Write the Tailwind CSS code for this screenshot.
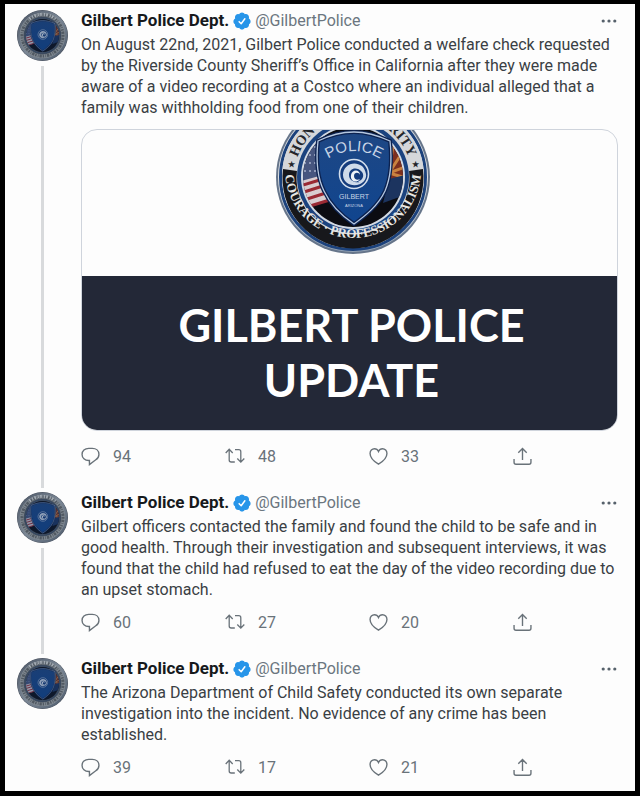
<!DOCTYPE html>
<html lang="en">
<head>
    <meta charset="UTF-8" />
    <meta name="viewport" content="width=device-width, initial-scale=1.0" />
    <title>Gilbert Police Dept. thread</title>
    <script src="https://cdn.jsdelivr.net/npm/@tailwindcss/browser@4"></script>
</head>
<body class="bg-black pt-1 px-[5px] pb-[5px] font-['Roboto','Liberation_Sans',sans-serif] text-base leading-[21px] text-[#3a3f44]">

    <!-- ====== Shared shapes ====== -->
    <svg class="absolute size-0" aria-hidden="true" xmlns="http://www.w3.org/2000/svg">
        <defs>
            <linearGradient id="steel" x1="0" y1="0" x2="0" y2="1">
                <stop offset="0" stop-color="#c9ccd0" /><stop offset=".5" stop-color="#dfe2e5" /><stop offset="1" stop-color="#8fa0b4" />
            </linearGradient>
            <linearGradient id="rim" x1="0" y1="0" x2="1" y2="1">
                <stop offset="0" stop-color="#4c5665" /><stop offset=".5" stop-color="#7c8896" /><stop offset="1" stop-color="#4d5a6b" />
            </linearGradient>
            <linearGradient id="shieldFill" x1="0" y1="0" x2="0" y2="1">
                <stop offset="0" stop-color="#1e4784" /><stop offset="1" stop-color="#10458f" />
            </linearGradient>
            <clipPath id="disc"><circle r="50" /></clipPath>
            <path id="shieldShape" d="M1 -45C11 -45 24 -42 37 -36C39 -18 38 0 32 14C25 29 12 39 1 47C-11 39 -22 29 -29 14C-36 0 -37 -18 -35 -36C-23 -42 -10 -45 1 -45Z" />
            <path id="topArc" d="M-59 0A59 59 0 0 1 59 0" />
            <path id="bottomArc" d="M-68 -7A68 68 0 1 0 68 -7" />
            <path id="policeArc" d="M-30 -15Q1 -37 32 -15" />
        </defs>

        <symbol id="emblem" viewBox="-52 -52 104 104">
            <circle r="50" fill="#0b0c12" />
            <g clip-path="url(#disc)">
                <path d="M-52 -38L-28 -42L-26 10L-52 8Z" fill="#47567f" />
                <path d="M-49 -30h20M-49 -22h20M-49 -14h20M-49 -6h20" stroke="#8f9ab8" stroke-width="2" stroke-dasharray="2 3" />
                <path d="M-52 4L-30 -2L-20 22L-44 30Z" fill="#d9cdd0" />
                <path d="M-50 8L-30 2M-49 15L-27 8M-46 22L-24 15M-43 29L-20 22" stroke="#9a2a34" stroke-width="3" />
                <path d="M36 -34L52 -20V2L34 4Z" fill="#7c2f1f" />
                <path d="M36 -4L40 -32M36 -4L49 -24M36 -4L52 -10M36 -4L50 0" stroke="#c98240" stroke-width="3" />
                <path d="M36 2L52 -2V18L30 26Z" fill="#1c345f" />
            </g>
            <use href="#shieldShape" fill="url(#shieldFill)" stroke="#0c2250" stroke-width="4" />
            <use href="#shieldShape" fill="none" stroke="#b5c7df" stroke-width="1.3" />
            <circle cx="1" cy="-3" r="14.5" fill="#143c7d" stroke="#d4dfed" stroke-width="1.6" />
            <path d="M9 -11C1 -17 -10 -12 -10 -2C-10 8 4 12 11 4C5 7 -4 5 -4 -2C-4 -9 4 -11 9 -5C12 -1 9 4 5 4C9 9 14 2 13 -3C12 -7 11 -9 9 -11Z" fill="#cfdbea" />
            <path d="M-2 -2C-1 -8 7 -8 7 -2C6 -5 1 -5 1 -1C1 2 4 4 7 2C3 7 -3 4 -2 -2Z" fill="#eef3f8" />
        </symbol>

        <symbol id="avatarArt" viewBox="-77 -77 154 154">
            <circle r="77" fill="#4a525e" />
            <circle r="71" fill="none" stroke="url(#rim)" stroke-width="9" />
            <circle r="63" fill="none" stroke="#7d868f" stroke-width="12" />
            <circle r="62" fill="none" stroke="#515962" stroke-width="9" stroke-dasharray="4 3 7 3 2 4" />
            <path d="M-40 -50A64 64 0 0 1 40 -50" fill="none" stroke="#a3abb3" stroke-width="9" stroke-dasharray="5 6 3 4" />
            <circle r="53" fill="none" stroke="#344761" stroke-width="4" />
            <use href="#emblem" x="-52" y="-52" width="104" height="104" />
            <circle r="50" fill="#15315c" fill-opacity=".35" />
        </symbol>

        <symbol id="verified" viewBox="1 1 22 22">
            <path fill="#2795e9" d="M22.5 12.5c0-1.58-.88-2.95-2.15-3.6.15-.43.24-.9.24-1.4 0-2.21-1.71-4-3.82-4-.47 0-.92.09-1.34.25C14.82 2.42 13.51 1.5 12 1.5s-2.82.92-3.43 2.25a3.7 3.7 0 0 0-1.34-.25c-2.11 0-3.82 1.79-3.82 4 0 .49.09.97.24 1.4-1.27.65-2.15 2.02-2.15 3.6 0 1.5.78 2.8 1.94 3.49-.02.17-.03.34-.03.51 0 2.21 1.71 4 3.82 4 .47 0 .92-.09 1.34-.25.6 1.33 1.92 2.25 3.43 2.25s2.82-.92 3.43-2.25c.42.16.87.25 1.34.25 2.11 0 3.82-1.79 3.82-4 0-.17-.01-.34-.03-.51 1.16-.69 1.94-1.99 1.94-3.49z" />
            <path fill="none" stroke="#fff" stroke-width="1.8" stroke-linecap="round" stroke-linejoin="round" d="M8.500 12.800l2.500 2.500 4.500-6" />
        </symbol>
        <symbol id="dots" viewBox="0 0 16 6">
            <circle cx="2.200" cy="3" r="1.600" /><circle cx="8" cy="3" r="1.600" /><circle cx="13.800" cy="3" r="1.600" />
        </symbol>
        <symbol id="reply" viewBox="0 0 18 18">
            <path d="M7.300 1.300h3.400c3.700 0 6.300 2.400 6.300 5.700 0 2.400-1.200 4-3.300 5.300L8 16.700v-3.900h-.7C3.600 12.800 1 10.300 1 7s2.600-5.700 6.300-5.700z" />
        </symbol>
        <symbol id="retweet" viewBox="0 0 20 18">
            <path d="M.7 6l3.500-3.700L7.700 6M4.200 2.500v10.500c0 1.200.8 2 2 2h3.600M10 2.700h3.800c1.200 0 2 .8 2 2v10.300M12.300 11.500l3.500 3.600 3.500-3.600" />
        </symbol>
        <symbol id="like" viewBox="0 0 18 18">
            <path d="M9 16.300C5.800 14.400 1 10.400 1 6.200c0-2.600 1.900-4.600 4.200-4.600C7 1.600 8.300 2.700 9 4.300c.7-1.600 2-2.700 3.800-2.700C15.100 1.600 17 3.600 17 6.200c0 4.200-4.800 8.200-8 10.100z" />
        </symbol>
        <symbol id="share" viewBox="0 0 18 18">
            <path d="M9 12.300V1.500M5 5.500l4-4 4 4M1 11.300v3.200c0 1.200.6 1.800 1.800 1.800h12.400c1.200 0 1.800-.6 1.800-1.800v-3.200" />
        </symbol>
    </svg>

    <main class="bg-[#fdfdfd] pt-[6px] pl-3 pr-[17px] pb-[14px]">

        <!-- ====== Tweet 1 ====== -->
        <article class="flex gap-[13px]">
            <div class="flex w-[51px] shrink-0 flex-col items-center">
                <svg class="size-[51px]" role="img" aria-label="Gilbert Police Dept."><use href="#avatarArt" /></svg>
                <div class="mt-[5px] mb-1 w-[3px] flex-1 bg-[#d8dadc]"></div>
            </div>
            <div class="min-w-0 flex-1 pb-[26px]">
                <header class="flex items-center">
                    <a href="#" class="text-[17px] font-bold text-[#16191c]">Gilbert Police Dept.</a>
                    <svg class="ml-1 size-[18px]" role="img" aria-label="Verified account"><use href="#verified" /></svg>
                    <a href="#" class="ml-1 text-[#6b7680]">@GilbertPolice</a>
                    <button type="button" aria-label="More" class="ml-auto"><svg class="h-[6px] w-[18px] fill-[#56616b]"><use href="#dots" /></svg></button>
                </header>
                <p class="mt-[3px]">On August 22nd, 2021, Gilbert Police conducted a welfare check requested<br>by the Riverside County Sheriff’s Office in California after they were made<br>aware of a video recording at a Costco where an individual alleged that a<br>family was withholding food from one of their children.</p>

                <figure class="mt-[11px] overflow-hidden rounded-2xl border border-[#cfd4dc]">
                    <div class="flex h-[146px] justify-center pl-2">
                        <svg class="h-[146px] w-[160px]" viewBox="-79 -47 160 146" role="img" aria-label="Gilbert Police seal">
                            <circle r="77" fill="#66758a" />
                            <circle r="75" fill="url(#steel)" />
                            <circle r="72.500" fill="none" stroke="#1c427c" stroke-width="3" />
                            <circle r="63.500" fill="none" stroke="#d5d7da" stroke-width="15" />
                            <path d="M-63 -7A63.500 63.500 0 1 0 63 -7" fill="none" stroke="#17181c" stroke-width="14" />
                            <circle r="56" fill="#1b437f" />
                            <circle r="52" fill="#d3dae4" />
                            <use href="#emblem" x="-52" y="-52" width="104" height="104" />
                            <g class="font-['Liberation_Serif',serif] font-bold" text-anchor="middle">
                                <text font-size="14" fill="#24262b"><textPath href="#topArc" startOffset="50%">HONOR · INTEGRITY</textPath></text>
                                <text font-size="13" fill="#e6e6e3"><textPath href="#bottomArc" startOffset="50%">COURAGE · PROFESSIONALISM</textPath></text>
                                <text x="-62" y="-10" font-size="8" fill="#24262b">★</text>
                                <text x="62" y="-10" font-size="8" fill="#24262b">★</text>
                            </g>
                            <g class="font-['Liberation_Sans',sans-serif]" text-anchor="middle" fill="#c8d5e6">
                                <text font-size="15"><textPath href="#policeArc" startOffset="50%">POLICE</textPath></text>
                                <text x="1" y="22" font-size="7">GILBERT</text>
                                <text x="1" y="30" font-size="4">ARIZONA</text>
                            </g>
                        </svg>
                    </div>
                    <figcaption class="bg-[#232837] py-[22px] pl-1 text-center font-['Lato',sans-serif] text-[45px] leading-[55px] font-bold text-white">GILBERT POLICE<br>UPDATE</figcaption>
                </figure>

                <div class="mt-[15px] grid grid-cols-[1fr_1fr_1fr_105px] text-[#697279]">
                    <button type="button" aria-label="Reply" class="flex h-5 items-center gap-[13px]"><svg class="size-[19px] fill-none stroke-current stroke-[1.3]"><use href="#reply" /></svg>94</button>
                    <button type="button" aria-label="Retweet" class="flex h-5 items-center gap-[13px]"><svg class="h-[18px] w-5 fill-none stroke-current stroke-[1.3]"><use href="#retweet" /></svg>48</button>
                    <button type="button" aria-label="Like" class="flex h-5 items-center gap-[13px]"><svg class="size-[19px] fill-none stroke-current stroke-[1.3]"><use href="#like" /></svg>33</button>
                    <button type="button" aria-label="Share" class="flex h-5 items-center"><svg class="size-[19px] fill-none stroke-current stroke-[1.3]"><use href="#share" /></svg></button>
                </div>
            </div>
        </article>

        <!-- ====== Tweet 2 ====== -->
        <article class="flex gap-[13px]">
            <div class="flex w-[51px] shrink-0 flex-col items-center">
                <svg class="size-[51px]" role="img" aria-label="Gilbert Police Dept."><use href="#avatarArt" /></svg>
                <div class="mt-[5px] mb-1 w-[3px] flex-1 bg-[#d8dadc]"></div>
            </div>
            <div class="min-w-0 flex-1 pb-[26px]">
                <header class="flex items-center">
                    <a href="#" class="text-[17px] font-bold text-[#16191c]">Gilbert Police Dept.</a>
                    <svg class="ml-1 size-[18px]" role="img" aria-label="Verified account"><use href="#verified" /></svg>
                    <a href="#" class="ml-1 text-[#6b7680]">@GilbertPolice</a>
                    <button type="button" aria-label="More" class="ml-auto"><svg class="h-[6px] w-[18px] fill-[#56616b]"><use href="#dots" /></svg></button>
                </header>
                <p class="mt-[3px]">Gilbert officers contacted the family and found the child to be safe and in<br>good health. Through their investigation and subsequent interviews, it was<br>found that the child had refused to eat the day of the video recording due to<br>an upset stomach.</p>
                <div class="mt-3 grid grid-cols-[1fr_1fr_1fr_105px] text-[#697279]">
                    <button type="button" aria-label="Reply" class="flex h-5 items-center gap-[13px]"><svg class="size-[19px] fill-none stroke-current stroke-[1.3]"><use href="#reply" /></svg>60</button>
                    <button type="button" aria-label="Retweet" class="flex h-5 items-center gap-[13px]"><svg class="h-[18px] w-5 fill-none stroke-current stroke-[1.3]"><use href="#retweet" /></svg>27</button>
                    <button type="button" aria-label="Like" class="flex h-5 items-center gap-[13px]"><svg class="size-[19px] fill-none stroke-current stroke-[1.3]"><use href="#like" /></svg>20</button>
                    <button type="button" aria-label="Share" class="flex h-5 items-center"><svg class="size-[19px] fill-none stroke-current stroke-[1.3]"><use href="#share" /></svg></button>
                </div>
            </div>
        </article>

        <!-- ====== Tweet 3 ====== -->
        <article class="flex gap-[13px]">
            <svg class="size-[51px] shrink-0" role="img" aria-label="Gilbert Police Dept."><use href="#avatarArt" /></svg>
            <div class="min-w-0 flex-1">
                <header class="flex items-center">
                    <a href="#" class="text-[17px] font-bold text-[#16191c]">Gilbert Police Dept.</a>
                    <svg class="ml-1 size-[18px]" role="img" aria-label="Verified account"><use href="#verified" /></svg>
                    <a href="#" class="ml-1 text-[#6b7680]">@GilbertPolice</a>
                    <button type="button" aria-label="More" class="ml-auto"><svg class="h-[6px] w-[18px] fill-[#56616b]"><use href="#dots" /></svg></button>
                </header>
                <p class="mt-[3px]">The Arizona Department of Child Safety conducted its own separate<br>investigation into the incident. No evidence of any crime has been<br>established.</p>
                <div class="mt-3 grid grid-cols-[1fr_1fr_1fr_105px] text-[#697279]">
                    <button type="button" aria-label="Reply" class="flex h-5 items-center gap-[13px]"><svg class="size-[19px] fill-none stroke-current stroke-[1.3]"><use href="#reply" /></svg>39</button>
                    <button type="button" aria-label="Retweet" class="flex h-5 items-center gap-[13px]"><svg class="h-[18px] w-5 fill-none stroke-current stroke-[1.3]"><use href="#retweet" /></svg>17</button>
                    <button type="button" aria-label="Like" class="flex h-5 items-center gap-[13px]"><svg class="size-[19px] fill-none stroke-current stroke-[1.3]"><use href="#like" /></svg>21</button>
                    <button type="button" aria-label="Share" class="flex h-5 items-center"><svg class="size-[19px] fill-none stroke-current stroke-[1.3]"><use href="#share" /></svg></button>
                </div>
            </div>
        </article>
    </main>
</body>
</html>
